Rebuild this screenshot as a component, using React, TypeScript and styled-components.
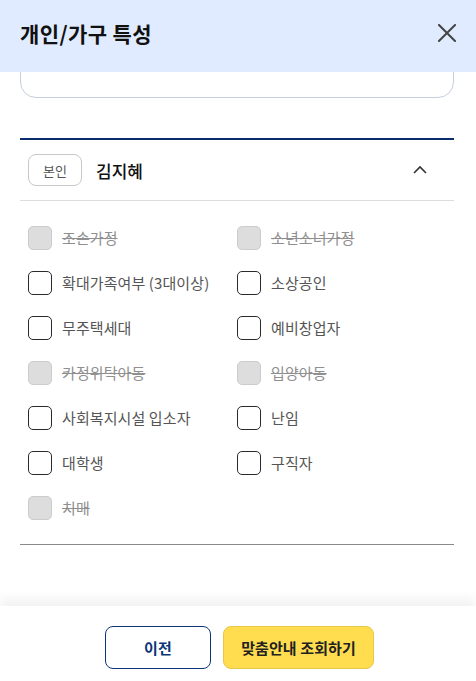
import React from 'react';
import styled, { createGlobalStyle } from 'styled-components';

const GlobalStyle = createGlobalStyle`
    html, body, #root {
        margin: 0;
        padding: 0;
        height: 100%;
    }
    body {
        font-family: "Noto Sans CJK KR", "Noto Sans", sans-serif;
        background: #ffffff;
    }
    * {
        box-sizing: border-box;
    }
`;

const Sheet = styled.div`
    width: 100%;
    height: 100vh;
    display: flex;
    flex-direction: column;
    background: #ffffff;
`;

const Header = styled.div`
    height: 72px;
    flex: none;
    background: #e0ebff;
    display: flex;
    align-items: center;
    justify-content: space-between;
    padding: 0 18px 6px 20px;
`;

const Title = styled.h1`
    margin: 0;
    font-size: 21px;
    font-weight: 700;
    color: #111111;
    letter-spacing: 0.4px;
`;

const CloseButton = styled.button`
    border: none;
    background: none;
    padding: 0;
    width: 22px;
    height: 22px;
    display: flex;
    align-items: center;
    justify-content: center;
    cursor: pointer;
`;

const Body = styled.div`
    flex: 1;
    overflow: hidden;
    padding: 0 22px 0 20px;
`;

const InputBox = styled.div`
    height: 56px;
    margin-top: -30px;
    border: 1px solid #c5cfe0;
    border-radius: 16px;
    padding: 10px 20px;
    font-size: 14px;
    color: #c0c0c0;
`;

const Section = styled.div`
    margin-top: 40px;
    border-top: 2px solid #0b2d6b;
    border-bottom: 1px solid #8a8a8a;
`;

const PersonRow = styled.div`
    height: 61px;
    display: flex;
    align-items: center;
    padding: 0 26px 0 8px;
    border-bottom: 1px solid #dddddd;
`;

const Badge = styled.span`
    width: 54px;
    height: 32px;
    border: 1px solid #c8c8c8;
    border-radius: 8px;
    display: flex;
    align-items: center;
    justify-content: center;
    font-size: 13px;
    color: #555555;
`;

const Name = styled.span`
    margin-left: 14px;
    font-size: 17px;
    font-weight: 500;
    color: #111111;
    flex: 1;
`;

const OptionGrid = styled.div`
    display: grid;
    grid-template-columns: 209px 1fr;
    grid-auto-rows: 45px;
    padding: 14px 8px 14px 8px;
`;

const Option = styled.label<{ $disabled?: boolean }>`
    display: flex;
    align-items: center;
    gap: 10px;
    font-size: 15px;
    color: ${p => (p.$disabled ? '#8f8f8f' : '#555555')};
    text-decoration: ${p => (p.$disabled ? 'line-through' : 'none')};
    letter-spacing: 0.1px;
`;

const Box = styled.span<{ $disabled?: boolean }>`
    width: 24px;
    height: 24px;
    flex: none;
    border-radius: 5px;
    border: 1px solid ${p => (p.$disabled ? '#cccccc' : '#2a2a2a')};
    background: ${p => (p.$disabled ? '#dddddd' : '#ffffff')};
`;

const Footer = styled.div`
    height: 75px;
    flex: none;
    display: flex;
    justify-content: center;
    align-items: flex-start;
    gap: 12px;
    padding-top: 20px;
    padding-left: 3px;
    background: #ffffff;
    box-shadow: 0 -8px 10px rgba(0, 0, 0, 0.05);
    position: relative;
`;

const Button = styled.button<{ $primary?: boolean }>`
    height: 43px;
    padding: 0;
    width: ${p => (p.$primary ? '151px' : '106px')};
    border-radius: 8px;
    border: 1px solid ${p => (p.$primary ? '#e6c845' : '#0b3578')};
    background: ${p => (p.$primary ? '#ffdd4f' : '#ffffff')};
    color: ${p => (p.$primary ? '#222222' : '#0b3578')};
    font-family: "Noto Sans CJK KR", "Noto Sans", sans-serif;
    font-size: 15px;
    font-weight: 700;
    letter-spacing: 0.1px;
    cursor: pointer;
`;

const options = [
    { label: '조손가정', disabled: true },
    { label: '소년소녀가정', disabled: true },
    { label: '확대가족여부 (3대이상)' },
    { label: '소상공인' },
    { label: '무주택세대' },
    { label: '예비창업자' },
    { label: '카정위탁아동', disabled: true },
    { label: '입양아동', disabled: true },
    { label: '사회복지시설 입소자' },
    { label: '난임' },
    { label: '대학생' },
    { label: '구직자' },
    { label: '치매', disabled: true },
];

function App() {
    return (
        <>
            <GlobalStyle />
            <Sheet>
                <Header>
                    <Title>개인/가구 특성</Title>
                    <CloseButton aria-label="닫기">
                        <svg width="18" height="18" viewBox="0 0 18 18">
                            <path d="M1 1L17 17M17 1L1 17" stroke="#444" strokeWidth="2" strokeLinecap="square" />
                        </svg>
                    </CloseButton>
                </Header>
                <Body>
                    <InputBox>특이사항 입력</InputBox>
                    <Section>
                        <PersonRow>
                            <Badge>본인</Badge>
                            <Name>김지혜</Name>
                            <svg width="16" height="16" viewBox="0 0 16 16">
                                <polyline points="2,11 8,5 14,11" fill="none" stroke="#333" strokeWidth="1.6" />
                            </svg>
                        </PersonRow>
                        <OptionGrid>
                            {options.map(o => (
                                <Option key={o.label} $disabled={o.disabled}>
                                    <Box $disabled={o.disabled} />
                                    {o.label}
                                </Option>
                            ))}
                        </OptionGrid>
                    </Section>
                </Body>
                <Footer>
                    <Button>이전</Button>
                    <Button $primary>맞춤안내 조회하기</Button>
                </Footer>
            </Sheet>
        </>
    );
}

export default App;
